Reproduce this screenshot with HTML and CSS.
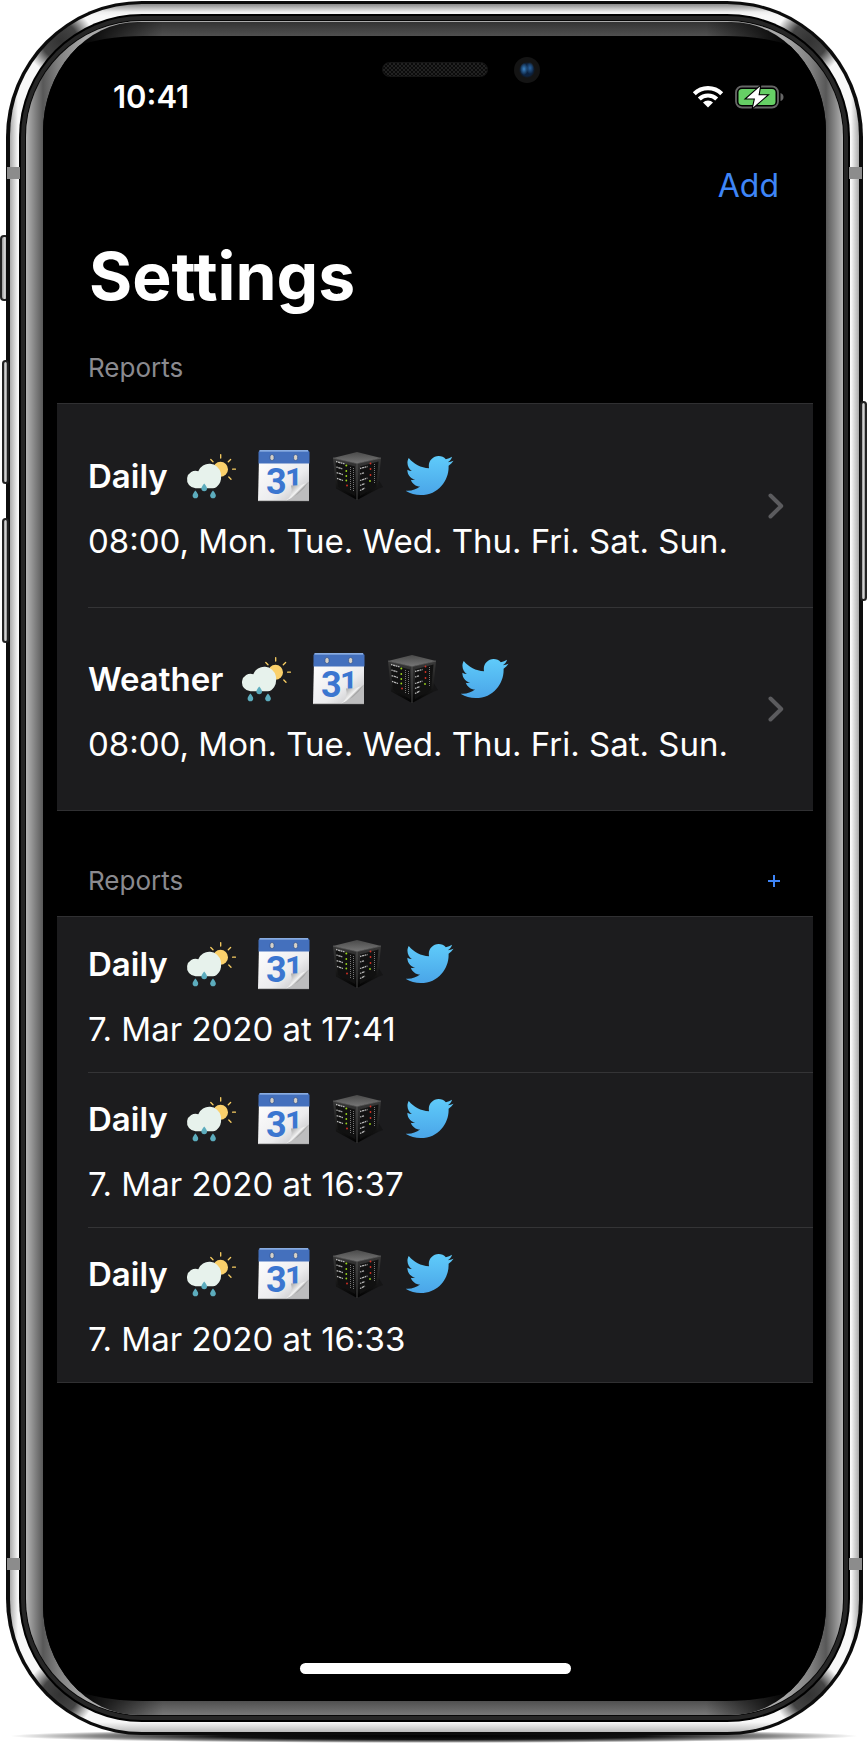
FILE: index.html
```html
<!DOCTYPE html>
<html lang="en">
<head>
<meta charset="utf-8">
<meta name="viewport" content="width=device-width, initial-scale=1">
<title>Settings</title>
<link rel="stylesheet" href="styles.css">
</head>
<body>
<svg class="sprite" aria-hidden="true">
  <defs>
    <linearGradient id="bird-fill" x1="0" y1="0" x2="0" y2="1"><stop offset="0" stop-color="#5fcbfa"/><stop offset="1" stop-color="#4aa5e8"/></linearGradient>
    <linearGradient id="page-fill" x1="0" y1="0" x2="1" y2="1"><stop offset="0" stop-color="#fff"/><stop offset="0.6" stop-color="#ececee"/><stop offset="1" stop-color="#b8b8ba"/></linearGradient>
    <linearGradient id="curl-fill" gradientUnits="userSpaceOnUse" x1="32" y1="34" x2="41" y2="43"><stop offset="0" stop-color="#999"/><stop offset="0.5" stop-color="#cfcfcf"/><stop offset="0.8" stop-color="#f4f4f4"/><stop offset="1" stop-color="#8a8a8a"/></linearGradient>
    <linearGradient id="top-fill" x1="0" y1="0" x2="0" y2="1"><stop offset="0" stop-color="#4a4a4a"/><stop offset="1" stop-color="#777"/></linearGradient>
    <linearGradient id="side-fill" x1="0" y1="0" x2="0" y2="1"><stop offset="0" stop-color="#3a3a3a"/><stop offset="0.7" stop-color="#151515"/><stop offset="1" stop-color="#000"/></linearGradient>
    <symbol id="weather" viewBox="0 0 52 52">
      <g stroke="#f9ce62" stroke-width="1.3" stroke-linecap="round"><path d="M36.7 4.6V8M46.600 9.500l-2.300 2.300M48.600 19.200h3M44.800 27l2.200 2.200M26.800 9.500l2.200 2.200"/></g>
      <circle cx="36.5" cy="19.2" r="7.5" fill="#fad06b"/>
      <path d="M11.5 38.2a8.7 8.7 0 1 1 2.8-17A11.8 11.8 0 0 1 36.8 23q1.2 7-1.6 11-2.8 4.2-6.2 4.2z" fill="#e7f2ec"/>
      <g fill="#5cacbd"><path d="M20.2 33.6q2.8 3.4 2.8 4.8a2.8 2.8 0 0 1-5.6 0q0-1.400 2.800-4.800z"/><path d="M11.400 40.600q2.800 3.400 2.800 4.800a2.800 2.800 0 0 1-5.600 0q0-1.400 2.800-4.800z"/><path d="M29 40.600q2.800 3.400 2.800 4.800a2.800 2.800 0 0 1-5.600 0q0-1.400 2.800-4.800z"/></g>
    </symbol>
    <symbol id="calendar" viewBox="0 0 52 52">
      <path d="M1 8H51V51H0z" fill="url(#page-fill)"/>
      <path d="M2 0H50l1.500 2V13.500H.5V2z" fill="#4470bd"/>
      <path d="M1.500.8H50" stroke="#9fc0ee" stroke-width="1.200"/>
      <g fill="#d6d1c8" stroke="#31518c" stroke-width=".7"><rect x="12" y="4.500" width="4" height="6" rx="2"/><rect x="35.600" y="4.500" width="4" height="6" rx="2"/></g>
      <text class="cal-digit" x="8" y="44" font-size="36">3</text>
      <text class="cal-digit" x="27" y="40" font-size="31">1</text>
      <path d="M51 31.500L28 51H51z" fill="#bdbdbe"/>
      <path d="M51 31.500Q45 36 33 35.500 36 46 27 51 41 46 51 31.500z" fill="url(#curl-fill)"/>
      <path d="M.2 50.700H51" stroke="#a9a9a9" stroke-width=".8"/>
    </symbol>
    <symbol id="server" viewBox="0 0 52 52">
      <path d="M25 50L46 39l5-2-5-8z" fill="#111" opacity=".6"/>
      <path d="M1 8L25 2 49 8 25 13.500z" fill="url(#top-fill)"/>
      <path d="M1 8L25 13.500V50L4 38.500z" fill="url(#side-fill)"/>
      <path d="M49 8L25 13.500V50L46 38.500z" fill="url(#side-fill)"/>
      <path d="M3.500 11.500L23 16.500V46L6 37z M46.500 11.500L28 16.500V46L44 37z" fill="#111"/>
      <path d="M1 8L25 13.500 49 8M25 13.500V50" fill="none" stroke="#666" stroke-width=".7"/>
      <g fill="none" stroke="#b4b4b4" stroke-width="1.300" stroke-dasharray="1.500 .6 2.500 .5"><path d="M4 11.500l8.500 2.400M4.300 17l6 1.800M4.600 22.600l6.400 2M5 28.300l6 2.200M28 18.500l7.500-2M28 24l4-1.200M28 30.500l7.500-2.500M28 35.500l5-2M28 40.500l5-2.500"/></g>
      <g fill="none" stroke="#777" stroke-dasharray="1 1"><path d="M18.500 17v23M21.500 18v24M42.500 14v19"/></g>
      <g fill="#9bd61c"><circle cx="14.300" cy="15.500" r="1"/><circle cx="14.300" cy="21" r=".9"/><circle cx="14.300" cy="26" r=".9"/><circle cx="38" cy="31" r=".9"/><circle cx="14.300" cy="30.500" r=".9"/></g>
      <g fill="#d83125"><circle cx="38.500" cy="13.500" r=".9"/><circle cx="38.500" cy="19" r=".9"/><circle cx="38.500" cy="25" r=".9"/><circle cx="15" cy="35.500" r=".9"/></g>
    </symbol>
    <symbol id="bird" viewBox="0 0 52 52">
      <path transform="translate(-.5 1.600) scale(2)" fill="url(#bird-fill)" d="M23.954 4.569c-.885.389-1.830.654-2.825.775 1.014-.611 1.794-1.574 2.163-2.723-.951.555-2.005.959-3.127 1.184-.896-.959-2.173-1.559-3.591-1.559-2.717 0-4.920 2.203-4.920 4.917 0 .390.045.765.127 1.124C7.691 8.094 4.066 6.130 1.640 3.161c-.427.722-.666 1.561-.666 2.475 0 1.710.870 3.213 2.188 4.096-.807-.026-1.566-.248-2.228-.616v.061c0 2.385 1.693 4.374 3.946 4.827-.413.111-.849.171-1.296.171-.314 0-.615-.030-.916-.086.631 1.953 2.445 3.377 4.604 3.417-1.680 1.319-3.809 2.105-6.102 2.105-.390 0-.779-.023-1.170-.067 2.189 1.394 4.768 2.209 7.557 2.209 9.054 0 13.999-7.496 13.999-13.986 0-.209 0-.420-.015-.630.961-.689 1.800-1.560 2.460-2.548z"/>
    </symbol>
  </defs>
</svg>

<div class="stage">
  <span class="key key-mute"></span>
  <span class="key key-up"></span>
  <span class="key key-down"></span>
  <span class="key key-side"></span>
  <div class="phone">
    <div class="steel">
      <div class="rim">
        <div class="glass">
          <div class="well">
            <div class="screen">
              <header class="status">
                <time>10:41</time>
                <span class="status-icons">
                  <svg width="32" height="24" viewBox="0 0 32 24" aria-label="Wi-Fi"><g fill="none" stroke="#fff" stroke-width="4.200"><path d="M2.300 8.800a19.500 19.500 0 0 1 27.400 0"/><path d="M7.300 14a12.500 12.500 0 0 1 17.400 0"/></g><path d="M16 22.500l-5-5a7 7 0 0 1 10 0z" fill="#fff"/></svg>
                  <svg width="49" height="24" viewBox="0 0 49 24" aria-label="Battery charging"><rect x="1" y="1.500" width="42" height="21" rx="6" fill="none" stroke="#666" stroke-width="1.800"/><path d="M45.500 8q3 1 3 4t-3 4z" fill="#666"/><rect x="3.500" y="4" width="37" height="16" rx="3.500" fill="#66cf65"/><path d="M25 1.500L11.500 13.500H20L18 22.500 32 10.300H23.500z" fill="#fff" stroke="#000" stroke-width="2.200" paint-order="stroke"/></svg>
                </span>
              </header>
              <nav class="bar"><button class="add" type="button">Add</button></nav>
              <main>
                <h1>Settings</h1>
                <section>
                  <div class="heading"><h2>Reports</h2></div>
                  <ul class="list tall">
                    <li><a class="row" href="#daily">
                      <span class="body">
                        <span class="name"><strong>Daily</strong><span class="icons"><svg><use href="#weather"/></svg><svg><use href="#calendar"/></svg><svg><use href="#server"/></svg><svg><use href="#bird"/></svg></span></span>
                        <span class="detail">08:00, Mon. Tue. Wed. Thu. Fri. Sat. Sun.</span>
                      </span>
                      <svg class="chevron" viewBox="0 0 16 26"><path d="M2.500 2.500L13.200 13 2.500 23.500"/></svg>
                    </a></li>
                    <li><a class="row" href="#weather-report">
                      <span class="body">
                        <span class="name"><strong>Weather</strong><span class="icons"><svg><use href="#weather"/></svg><svg><use href="#calendar"/></svg><svg><use href="#server"/></svg><svg><use href="#bird"/></svg></span></span>
                        <span class="detail">08:00, Mon. Tue. Wed. Thu. Fri. Sat. Sun.</span>
                      </span>
                      <svg class="chevron" viewBox="0 0 16 26"><path d="M2.500 2.500L13.200 13 2.500 23.500"/></svg>
                    </a></li>
                  </ul>
                </section>
                <section>
                  <div class="heading spaced"><h2>Reports</h2><button class="plus" type="button" aria-label="New report"><svg width="14" height="14" viewBox="0 0 14 14"><path d="M7 1v12M1 7h12"/></svg></button></div>
                  <ul class="list">
                    <li><a class="row" href="#r1"><span class="body"><span class="name"><strong>Daily</strong><span class="icons"><svg><use href="#weather"/></svg><svg><use href="#calendar"/></svg><svg><use href="#server"/></svg><svg><use href="#bird"/></svg></span></span><span class="detail">7. Mar 2020 at 17:41</span></span></a></li>
                    <li><a class="row" href="#r2"><span class="body"><span class="name"><strong>Daily</strong><span class="icons"><svg><use href="#weather"/></svg><svg><use href="#calendar"/></svg><svg><use href="#server"/></svg><svg><use href="#bird"/></svg></span></span><span class="detail">7. Mar 2020 at 16:37</span></span></a></li>
                    <li><a class="row" href="#r3"><span class="body"><span class="name"><strong>Daily</strong><span class="icons"><svg><use href="#weather"/></svg><svg><use href="#calendar"/></svg><svg><use href="#server"/></svg><svg><use href="#bird"/></svg></span></span><span class="detail">7. Mar 2020 at 16:33</span></span></a></li>
                  </ul>
                </section>
              </main>
              <div class="home"></div>
            </div>
          </div>
        </div>
      </div>
    </div>
    <span class="speaker"></span>
    <span class="camera"></span>
    <span class="seam seam-tl"></span>
    <span class="seam seam-tr"></span>
    <span class="seam seam-bl"></span>
    <span class="seam seam-br"></span>
  </div>
</div>
</body>
</html>
```
FILE: styles.css
```css
* { box-sizing: border-box; }
body { margin: 0; background: #fff; font-family: Inter, "Liberation Sans", sans-serif; color: #fff; }
.sprite { position: absolute; width: 0; height: 0; }
h1, h2, ul { margin: 0; padding: 0; }
button { padding: 0; border: 0; background: none; font: inherit; color: #3e85f7; }

/* Device body: each shell wraps the next with its own thickness */
.stage { position: relative; display: flex; min-height: 100vh; padding: 1px 5px 8px 6px; }
.stage::after {
  content: ""; position: absolute; left: 10px; right: 10px; bottom: 0; height: 14px;
  background: radial-gradient(closest-side, #000 0, #111 50%, #888 80%, transparent 100%);
}
.phone { position: relative; z-index: 1; display: flex; flex: 1; padding: 3px 4px; border-radius: 136px; background: #0c0c0c; }
.steel {
  display: flex; flex: 1; padding: 10px 9px; border-radius: 132px;
  background:
    radial-gradient(circle at 50px 37px, #333 0, #444 18px, transparent 34px),
    radial-gradient(circle at calc(100% - 50px) 37px, #333 0, #444 18px, transparent 34px),
    radial-gradient(circle at 50px calc(100% - 37px), #333 0, #444 18px, transparent 34px),
    radial-gradient(circle at calc(100% - 50px) calc(100% - 37px), #333 0, #444 18px, transparent 34px),
    linear-gradient(#888 0, #eee 8px, transparent 12px, transparent calc(100% - 10px), #bbb 100%),
    linear-gradient(90deg, #aaa 0, #f8f8f8 8px, #f8f8f8 calc(100% - 8px), #aaa 100%);
}
.rim { display: flex; flex: 1; padding: 2px; border-radius: 123px; background: #000; }
.glass { display: flex; flex: 1; padding: 5px; border-radius: 121px; background: #262626; }
.well {
  display: flex; flex: 1; padding: 1px 17px 0; border-radius: 116px; box-shadow: 0 0 0 1px #050505;
  background: linear-gradient(90deg, #b4b4b4 0, #888 8px, #585858 17px, #808080 32px, #aaa 60px, #aaa calc(100% - 60px), #808080 calc(100% - 32px), #585858 calc(100% - 17px), #888 calc(100% - 8px), #b4b4b4 100%);
}
.screen {
  position: relative; display: flex; flex: 1; flex-direction: column; min-width: 0; padding: 14px 13px 41px 14px;
  border-radius: 95px / 110px; overflow: hidden;
  background:
    linear-gradient(90deg, #000 36px, transparent 120px, transparent calc(100% - 120px), #000 calc(100% - 36px)),
    linear-gradient(#333 0, #505050 14px, #404040 40px, #404040 calc(100% - 40px), #505050 calc(100% - 14px), #777 100%);
}
.screen::before { content: ""; position: absolute; inset: 14px 0; border-radius: 100px / 40px; background: #000; }
.screen > * { position: relative; }

.key { position: absolute; width: 9px; border: 2px solid #222; border-radius: 4px; background: linear-gradient(90deg, #999, #ddd 60%, #777); }
.key-mute { left: 0; top: 235px; height: 66px; }
.key-up { left: 2px; top: 360px; height: 124px; z-index: 2; width: 7px; }
.key-down { left: 2px; top: 518px; height: 125px; z-index: 2; width: 7px; }
.key-side { right: 1px; top: 401px; height: 200px; z-index: 2; width: 7px; }
.seam { position: absolute; width: 13px; height: 12px; background: #8c8c8c; }
.seam-tl { left: 1px; top: 166px; }
.seam-tr { right: 1px; top: 166px; }
.seam-bl { left: 1px; bottom: 165px; }
.seam-br { right: 1px; bottom: 165px; }
.speaker {
  position: absolute; top: 61px; left: calc(50% - 53px); width: 106px; height: 15px; border: 1px solid #161616; border-radius: 8px;
  background: repeating-conic-gradient(#222 0 25%, #0b0b0b 0 50%) 0 0 / 4px 4px;
}
.camera {
  position: absolute; top: 56px; left: calc(50% + 79px); width: 26px; height: 26px; border-radius: 50%;
  background:
    radial-gradient(ellipse 4px 6px at 10px 12px, #3b83c4, transparent),
    radial-gradient(ellipse 4px 6px at 16px 11px, #2a64a0, transparent),
    radial-gradient(circle, #0c2240 6px, #141414 8px);
}

/* App */
.status { display: flex; align-items: center; justify-content: space-between; height: 122px; padding: 0 29px 0 56px; }
.status time { font-size: 31px; font-weight: 600; line-height: 36px; }
.status-icons { display: flex; align-items: center; gap: 11px; }
.bar { display: flex; align-items: center; justify-content: flex-end; height: 56px; padding: 0 34px; }
.add { font-size: 32px; line-height: 40px; }
h1 { margin-top: 22px; padding: 0 32px; font-size: 66px; font-weight: 700; line-height: 80px; }
.heading { display: flex; align-items: center; justify-content: space-between; padding: 36px 32px 19px 31px; line-height: 32px; }
.heading.spaced { padding-top: 54px; }
h2 { font-size: 26px; font-weight: 400; color: #8a8a8f; }
.plus { display: flex; }
.plus path { stroke: #3e85f7; stroke-width: 2; }
.list { list-style: none; background: #1c1c1e; border: solid #303032; border-width: 1px 0; }
.row { position: relative; display: flex; align-items: center; justify-content: space-between; padding: 21px 29px 19px 31px; color: inherit; text-decoration: none; }
.tall .row { padding-top: 42px; padding-bottom: 42px; }
.tall .body { padding-top: 4px; }
li + li .row::before { content: ""; position: absolute; top: 0; left: 31px; right: 0; height: 1px; background: #343436; }
.body { display: flex; flex-direction: column; gap: 15px; }
.name { display: flex; align-items: center; gap: 16px; }
.name strong { font-size: 33px; font-weight: 600; line-height: 52px; }
.icons { display: flex; gap: 22px; }
.icons svg { width: 52px; height: 52px; }
.detail { font-size: 33px; line-height: 48px; white-space: nowrap; }
.chevron { flex: none; width: 16px; height: 26px; }
.chevron path { fill: none; stroke: #5b5b5e; stroke-width: 4; stroke-linecap: round; stroke-linejoin: round; }
.cal-digit { font-family: Roboto, sans-serif; font-weight: 700; fill: #3b76d0; }
.home { width: 271px; height: 11px; margin: auto auto 0; border-radius: 6px; background: #fff; }
```
